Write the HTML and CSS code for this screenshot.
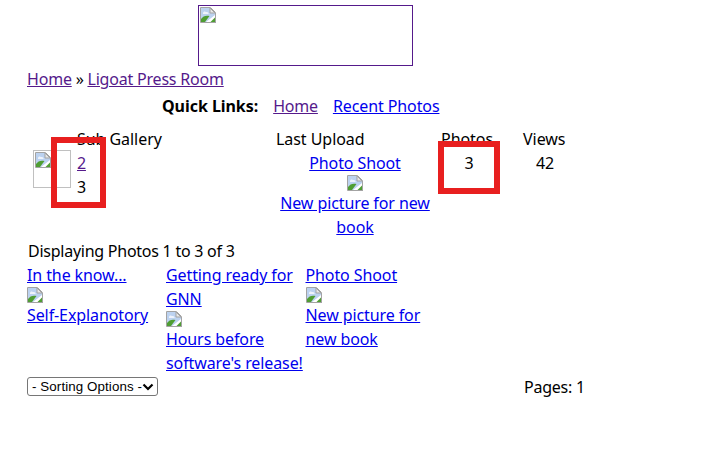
FILE: index.html
```html
<!DOCTYPE html>
<html lang="en">
<head>
  <meta charset="UTF-8" />
  <title>Ligoat Press Room</title>
  <link rel="stylesheet" href="styles.css">
</head>
<body>

<svg class="defs" width="0" height="0">
  <symbol id="broken" viewBox="0 0 16 16">
    <path d="M.5 15.5V.5H10.5L15.5 5.5V15.5Z" fill="#fff" stroke="#a3a3a3"/>
    <path d="M1 1H10V6H15V8L6 15H1Z" fill="#bcd2f0"/>
    <path d="M3 6C3 4.500 5 4 6 5C8 4.500 9 6 8.500 7H3Z" fill="#eef3fb"/>
    <path d="M1 15V12C3 9 6 8 9.500 9L5 15Z" fill="#4f9e33"/>
    <path d="M10 1V6H15Z" fill="#e8e8e8" stroke="#a3a3a3"/>
    <path d="M10.500 15L15 10.500V15Z" fill="#4f9e33"/>
    <path d="M11 15H16V16H11ZM15 10H16V15H15Z" fill="#a3a3a3"/>
  </symbol>
</svg>

<div class="page">
  <div class="banner"><svg class="icon"><use href="#broken"/></svg></div>
  <div class="crumbs"><a class="seen" href="#">Home</a> » <a class="seen" href="#">Ligoat Press Room</a></div>
  <div class="quick">
    <b>Quick Links:</b>
    <a class="seen" href="#">Home</a>
    <a href="#">Recent Photos</a>
  </div>

  <div class="subs">
    <div class="subs-head">Sub Gallery</div>
    <div class="subs-head">Last Upload</div>
    <div class="subs-head">Photos</div>
    <div class="subs-head">Views</div>
    <div class="sub-name">
      <div class="thumb"><svg class="icon"><use href="#broken"/></svg></div>
      <div><a class="seen" href="#">2</a><br>3</div>
    </div>
    <div class="sub-last">
      <a href="#">Photo Shoot</a>
      <svg class="icon"><use href="#broken"/></svg>
      <a href="#">New picture for new book</a>
    </div>
    <div class="sub-count">3</div>
    <div class="sub-views">42</div>
  </div>

  <div class="showing">Displaying Photos 1 to 3 of 3</div>
  <div class="photos">
    <div class="photo">
      <a href="#">In the know...</a>
      <svg class="icon"><use href="#broken"/></svg>
      <a href="#">Self-Explanotory</a>
    </div>
    <div class="photo">
      <a href="#">Getting ready for GNN</a>
      <svg class="icon"><use href="#broken"/></svg>
      <a href="#">Hours before software's release!</a>
    </div>
    <div class="photo">
      <a href="#">Photo Shoot</a>
      <svg class="icon"><use href="#broken"/></svg>
      <a href="#">New picture for new book</a>
    </div>
  </div>

  <div class="foot">
    <select class="sort"><option>- Sorting Options -</option></select>
    <span class="pages">Pages: 1</span>
  </div>
</div>

<!-- red markers drawn over the table -->
<div class="mark mark-sub"></div>
<div class="mark mark-photos"></div>

</body>
</html>
```

FILE: styles.css
```css
body {
  font-family: "Noto Sans", sans-serif;
  font-size: 16px;
  line-height: 24px;
  letter-spacing: -0.25px;
  color: #000;
  background: #fff;
  margin: 0;
  padding: 5px 0 0 27px;
}
a { color: #0000ee; letter-spacing: -0.1px; }
a.seen { color: #551a8b; letter-spacing: -0.2px; }
b { letter-spacing: -0.05px; }
.defs { position: absolute; }
.icon {
  display: block;
  width: 16px;
  height: 16px;
}
.page { width: 557px; }
.banner {
  width: 215px;
  height: 61px;
  box-sizing: border-box;
  border: 1px solid #551a8b;
  margin: 0 0 1px 171px;
  padding: 1px;
}
.quick {
  display: flex;
  gap: 15px;
  margin: 3px 0 9px 135px;
}
.subs {
  display: grid;
  grid-template-columns: 249px 165px 82px 60px;
}
.subs-head { letter-spacing: -0.05px; }
.subs-head:first-child { padding-left: 50px; }
.sub-name {
  display: flex;
  gap: 6px;
  padding-left: 6px;
}
.thumb {
  width: 38px;
  height: 38px;
  box-sizing: border-box;
  border: 1px solid #c0c0c0;
  margin-top: -1px;
  padding: 1px;
}
.sub-last {
  width: 156px;
  text-align: center;
  margin-left: 1px;
}
.sub-last .icon { margin: 0 auto; }
.sub-last a { display: block; }
.sub-count { text-align: center; width: 56px; }
.sub-views { text-align: center; width: 44px; }
.showing { padding-left: 1px; }
.photos {
  display: grid;
  grid-template-columns: 139px 139.500px 139px;
}
.photo a { display: block; }
.foot {
  display: flex;
  align-items: flex-start;
  justify-content: space-between;
  height: 24px;
  margin-top: 2px;
}
.sort {
  appearance: none;
  font-family: "Liberation Sans", sans-serif;
  font-size: 13.33px;
  letter-spacing: 0.1px;
  color: #000;
  width: 131px;
  height: 19px;
  padding: 0 0 0 4px;
  background: #fff url("data:image/svg+xml,%3Csvg xmlns='http://www.w3.org/2000/svg' width='12' height='8'%3E%3Cpath d='M1.500 1.500L6 6L10.500 1.500' fill='none' stroke='%23000' stroke-width='2.200'/%3E%3C/svg%3E") no-repeat right 3px center;
  border: 1px solid #767676;
  border-radius: 3px;
}
.pages { width: 60px; margin-top: -2px; white-space: nowrap; }
.mark {
  position: absolute;
  box-sizing: border-box;
  border: 6px solid #e81f1f;
}
.mark-sub { left: 51px; top: 137px; width: 55px; height: 71px; }
.mark-photos { left: 438px; top: 141px; width: 62px; height: 53px; }
```
